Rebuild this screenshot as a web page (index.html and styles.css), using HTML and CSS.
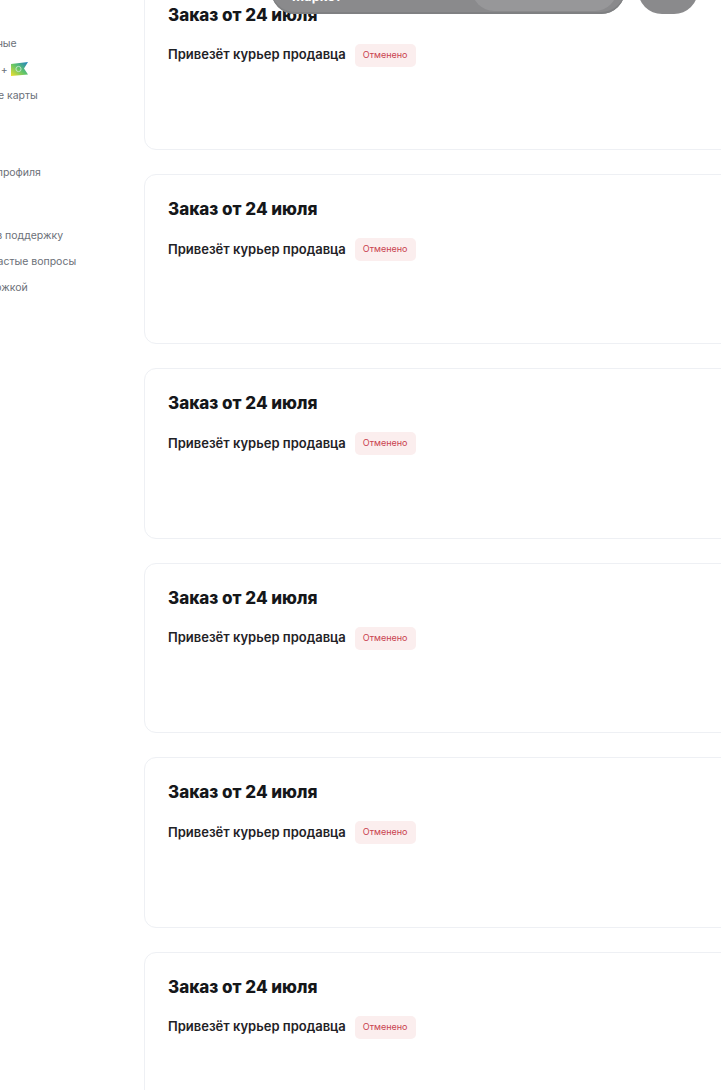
FILE: index.html
```html
<!DOCTYPE html>
<html lang="ru">
<head>
  <meta charset="UTF-8" />
  <meta name="viewport" content="width=device-width, initial-scale=1.0" />
  <title>Заказы</title>
  <link rel="stylesheet" href="styles.css">
</head>
<body>

  <!-- Floating bar -->
  <div class="floatBar">
    <div class="tabs">
      <span class="tabLabel">Маркет</span>
      <span class="tabActive"></span>
    </div>
    <div class="roundBtn"></div>
  </div>

  <div class="page">
    <!-- Sidebar -->
    <nav class="sidebar">
      <div class="navGroup">
        <a class="navItem">Мои данные</a>
        <a class="navItem navItemIcon">Подарки +
          <svg class="ecoIcon" width="17" height="14" viewBox="0 0 17 14">
            <defs>
              <linearGradient id="ecoGrad" x1="0" y1="1" x2="1" y2="0">
                <stop offset="0" stop-color="#f2e02c"/>
                <stop offset="0.5" stop-color="#5fc46a"/>
                <stop offset="1" stop-color="#1f7fc4"/>
              </linearGradient>
            </defs>
            <path d="M0 2 L17 0 L13 6.5 L17 12.5 L0 14 Z" fill="url(#ecoGrad)"/>
            <circle cx="7.5" cy="7" r="2.6" fill="none" stroke="#bfe6c8" stroke-width="1"/>
          </svg>
        </a>
        <a class="navItem">Бонусные карты</a>
      </div>
      <div class="navGroup navSingle">
        <a class="navItem">Данные профиля</a>
      </div>
      <div class="navGroup navHelp">
        <a class="navItem">Письмо в поддержку</a>
        <a class="navItem">Самые частые вопросы</a>
        <a class="navItem">Под обложкой</a>
      </div>
    </nav>

    <!-- Orders -->
    <main class="orders">
      <section class="orderCard">
        <h2 class="orderTitle">Заказ от 24 июля</h2>
        <div class="orderInfo"><span class="orderText">Привезёт курьер продавца</span><span class="status">Отменено</span></div>
      </section>
      <section class="orderCard">
        <h2 class="orderTitle">Заказ от 24 июля</h2>
        <div class="orderInfo"><span class="orderText">Привезёт курьер продавца</span><span class="status">Отменено</span></div>
      </section>
      <section class="orderCard">
        <h2 class="orderTitle">Заказ от 24 июля</h2>
        <div class="orderInfo"><span class="orderText">Привезёт курьер продавца</span><span class="status">Отменено</span></div>
      </section>
      <section class="orderCard">
        <h2 class="orderTitle">Заказ от 24 июля</h2>
        <div class="orderInfo"><span class="orderText">Привезёт курьер продавца</span><span class="status">Отменено</span></div>
      </section>
      <section class="orderCard">
        <h2 class="orderTitle">Заказ от 24 июля</h2>
        <div class="orderInfo"><span class="orderText">Привезёт курьер продавца</span><span class="status">Отменено</span></div>
      </section>
      <section class="orderCard">
        <h2 class="orderTitle">Заказ от 24 июля</h2>
        <div class="orderInfo"><span class="orderText">Привезёт курьер продавца</span><span class="status">Отменено</span></div>
      </section>
      <section class="orderCard">
        <h2 class="orderTitle">Заказ от 24 июля</h2>
        <div class="orderInfo"><span class="orderText">Привезёт курьер продавца</span><span class="status">Отменено</span></div>
      </section>
    </main>
  </div>

</body>
</html>
```

FILE: styles.css
```css
html, body {
  margin: 0;
  height: 100%;
  overflow: hidden;
  background: #fff;
  font-family: Inter, "Noto Sans", sans-serif;
  color: #1a1a1a;
}

.page {
  display: flex;
  align-items: flex-start;
  height: 1090px;
  overflow: hidden;
}

/* sidebar is partly scrolled out to the left */
.sidebar {
  flex: 0 0 144px;
  width: 144px;
  margin-top: 30px;
  overflow: hidden;
  display: flex;
  flex-direction: column;
  align-items: flex-end;
}

.navGroup {
  display: flex;
  flex-direction: column;
  width: 144px;
}

.navItem {
  display: flex;
  align-items: center;
  height: 26px;
  font-size: 10.5px;
  color: #6b7078;
  white-space: nowrap;
  margin-left: -47px;
}

.navItemIcon { gap: 3px; }
.ecoIcon { flex: none; }

.navSingle { margin-top: 51px; }
.navHelp { margin-top: 37px; }

.orders {
  flex: 1;
  margin-top: -20.4px;
  margin-right: -60px;
  display: flex;
  flex-direction: column;
  gap: 24px;
}

.orderCard {
  height: 170.4px;
  box-sizing: border-box;
  padding: 24px 23px;
  border: 1px solid #eef0f4;
  border-radius: 12px;
  background: #fff;
}

.orderTitle {
  margin: 0;
  font-size: 17px;
  line-height: 20px;
  font-weight: 800;
  color: #15171a;
}

.orderInfo {
  display: flex;
  align-items: center;
  gap: 9px;
  margin-top: 19px;
  font-size: 13px;
  font-weight: 600;
  color: #1f2226;
}

.orderText { margin-bottom: 2px; }

.status {
  padding: 0 8px;
  height: 23px;
  line-height: 21px;
  font-size: 9px;
  font-weight: 400;
  color: #c9424f;
  background: #fbeeee;
  border-radius: 5px;
}

/* floating bar, overlays the list */
.floatBar {
  position: fixed;
  top: -46px;
  left: 271px;
  display: flex;
  gap: 13px;
  z-index: 5;
}

.tabs {
  position: relative;
  width: 354px;
  height: 60px;
  box-sizing: border-box;
  background: #8a8a8c;
  border-radius: 24px;
  box-shadow: inset 0 -2px 0 #7f8082;
  overflow: hidden;
}

.tabLabel {
  position: absolute;
  left: 21px;
  bottom: 10px;
  font-size: 13px;
  font-weight: 700;
  color: #fff;
}

.tabActive {
  position: absolute;
  right: 8px;
  bottom: 3px;
  width: 145px;
  height: 52px;
  background: #979799;
  border-radius: 22px;
}

.roundBtn {
  width: 60px;
  height: 60px;
  background: #8a8a8c;
  border-radius: 24px;
}
```
